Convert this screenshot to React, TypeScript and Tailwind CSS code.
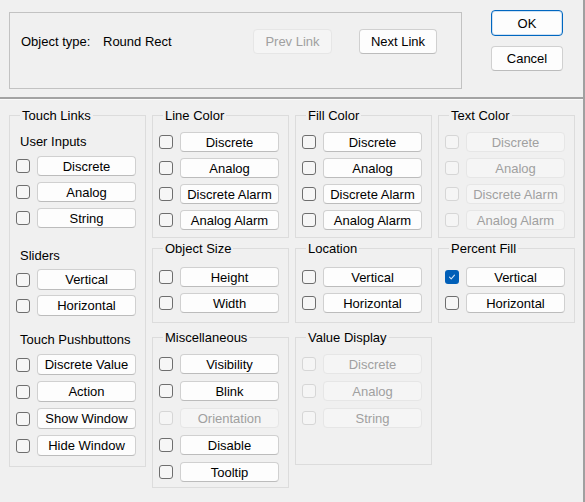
import React from "react";

type BtnProps = {
  label: string;
  disabled?: boolean;
  className?: string;
};

const Btn: React.FC<BtnProps> = ({ label, disabled, className = "" }) => (
  <button
    type="button"
    disabled={disabled}
    className={`flex items-center justify-center rounded-[4px] border text-[13px] leading-[15px] ${
      disabled
        ? "bg-[#f5f5f5] border-[#e6e6e6] text-[#a0a0a0]"
        : "bg-[#fdfdfd] border-[#d0d0d0] border-b-[#bcbcbc] text-black"
    } ${className}`}
  >
    {label}
  </button>
);

const Check: React.FC<{ checked?: boolean; disabled?: boolean }> = ({ checked, disabled }) => {
  if (checked) {
    return (
      <span className="flex h-[14px] w-[14px] shrink-0 items-center justify-center rounded-[3px] bg-[#005fb8]">
        <svg width="8" height="8" viewBox="0 0 8 8" fill="none">
          <path d="M1.5 4.2 L3.2 5.8 L6.5 2.2" stroke="#cfe3f7" strokeWidth="1.1" strokeLinecap="round" strokeLinejoin="round" />
        </svg>
      </span>
    );
  }
  return (
    <span
      className={`block h-[14px] w-[14px] shrink-0 rounded-[3px] border ${
        disabled ? "border-[#d6d6d6] bg-[#f5f5f5]" : "border-[#6e6e6e] bg-[#f6f6f6]"
      }`}
    />
  );
};

type Item = { label: string; disabled?: boolean; checked?: boolean };

const Rows: React.FC<{ items: Item[]; h: string; gap: string; className?: string }> = ({
  items,
  h,
  gap,
  className = "",
}) => (
  <div className={`flex flex-col ${gap} ${className}`}>
    {items.map((it) => (
      <div key={it.label} className="flex items-center gap-[7px]">
        <Check checked={it.checked} disabled={it.disabled} />
        <Btn label={it.label} disabled={it.disabled} className={`w-[99px] ${h}`} />
      </div>
    ))}
  </div>
);

const Group: React.FC<{ title: string; className?: string; children: React.ReactNode }> = ({
  title,
  className = "",
  children,
}) => (
  <fieldset className={`w-[137px] border border-[#dcdcdc] pl-[6px] pr-[9px] ${className}`}>
    <legend className="ml-[4px] px-[2px] text-[13px] leading-[15px] text-black">{title}</legend>
    {children}
  </fieldset>
);

const d = (labels: string[], opts: Partial<Item> = {}): Item[] =>
  labels.map((label) => ({ label, ...opts }));

export default function App() {
  return (
    <div
      className="h-[502px] w-[585px] overflow-hidden border-r-2 border-[#a0a0a0] bg-[#f0f0f0] text-black"
      style={{ fontFamily: '"Liberation Sans", Arial, sans-serif' }}
    >
      {/* header */}
      <div className="flex h-[99px] items-start border-b-2 border-[#a3a3a3]">
        <div className="ml-[9px] mt-[12px] flex h-[77px] w-[453px] items-start border border-[#c2c2c2] pl-[11px] pt-[16px]">
          <div className="flex h-[25px] items-center text-[13px] leading-[15px]">
            <span className="w-[82px]">Object type:</span>
            <span className="w-[150px]">Round Rect</span>
            <Btn label="Prev Link" disabled className="h-[25px] w-[79px]" />
            <Btn label="Next Link" className="ml-[27px] h-[25px] w-[78px]" />
          </div>
        </div>
        <div className="ml-[29px] mt-[10px] flex flex-col gap-[10px]">
          <button
            type="button"
            className="flex h-[26px] w-[72px] items-center justify-center rounded-[4px] border border-[#0067c0] bg-[#fdfdfd] text-[13px] leading-[15px] shadow-[inset_0_0_0_1px_#cfe1f3]"
          >
            OK
          </button>
          <Btn label="Cancel" className="h-[25px] w-[72px]" />
        </div>
      </div>

      {/* body */}
      <div className="flex items-start gap-[6px] border-t border-[#fafafa] pl-[9px] pt-[8px]">
        <Group title="Touch Links" className="pb-[10px]">
          <div className="ml-[4px] mt-[11px] text-[13px] leading-[15px]">User Inputs</div>
          <Rows items={d(["Discrete", "Analog", "String"])} h="h-[20px]" gap="gap-[6px]" className="mt-[7px]" />
          <div className="ml-[4px] mt-[20px] text-[13px] leading-[15px]">Sliders</div>
          <Rows items={d(["Vertical", "Horizontal"])} h="h-[21px]" gap="gap-[5px]" className="mt-[6px]" />
          <div className="ml-[4px] mt-[16px] text-[13px] leading-[15px]">Touch Pushbuttons</div>
          <Rows
            items={d(["Discrete Value", "Action", "Show Window", "Hide Window"])}
            h="h-[21px]"
            gap="gap-[6px]"
            className="mt-[7px]"
          />
        </Group>

        <div className="flex flex-col">
          <div className="flex items-start gap-[6px]">
            <Group title="Line Color" className="pb-[7px]">
              <Rows items={d(["Discrete", "Analog", "Discrete Alarm", "Analog Alarm"])} h="h-[20px]" gap="gap-[6px]" className="mt-[9px]" />
            </Group>
            <Group title="Fill Color" className="pb-[7px]">
              <Rows items={d(["Discrete", "Analog", "Discrete Alarm", "Analog Alarm"])} h="h-[20px]" gap="gap-[6px]" className="mt-[9px]" />
            </Group>
            <Group title="Text Color" className="pb-[7px]">
              <Rows
                items={d(["Discrete", "Analog", "Discrete Alarm", "Analog Alarm"], { disabled: true })}
                h="h-[20px]"
                gap="gap-[6px]"
                className="mt-[9px]"
              />
            </Group>
          </div>

          <div className="mt-[3px] flex items-start gap-[6px]">
            <Group title="Object Size" className="pb-[9px]">
              <Rows items={d(["Height", "Width"])} h="h-[20px]" gap="gap-[6px]" className="mt-[11px]" />
            </Group>
            <Group title="Location" className="pb-[9px]">
              <Rows items={d(["Vertical", "Horizontal"])} h="h-[20px]" gap="gap-[6px]" className="mt-[11px]" />
            </Group>
            <Group title="Percent Fill" className="pb-[9px]">
              <Rows
                items={[{ label: "Vertical", checked: true }, { label: "Horizontal" }]}
                h="h-[20px]"
                gap="gap-[6px]"
                className="mt-[11px]"
              />
            </Group>
          </div>

          <div className="mt-[7px] flex items-start gap-[6px]">
            <Group title="Miscellaneous" className="pb-[5px]">
              <Rows
                items={[
                  { label: "Visibility" },
                  { label: "Blink" },
                  { label: "Orientation", disabled: true },
                  { label: "Disable" },
                  { label: "Tooltip" },
                ]}
                h="h-[20px]"
                gap="gap-[7px]"
                className="mt-[9px]"
              />
            </Group>
            <Group title="Value Display" className="pb-[36px]">
              <Rows
                items={d(["Discrete", "Analog", "String"], { disabled: true })}
                h="h-[20px]"
                gap="gap-[7px]"
                className="mt-[9px]"
              />
            </Group>
          </div>
        </div>
      </div>
    </div>
  );
}
